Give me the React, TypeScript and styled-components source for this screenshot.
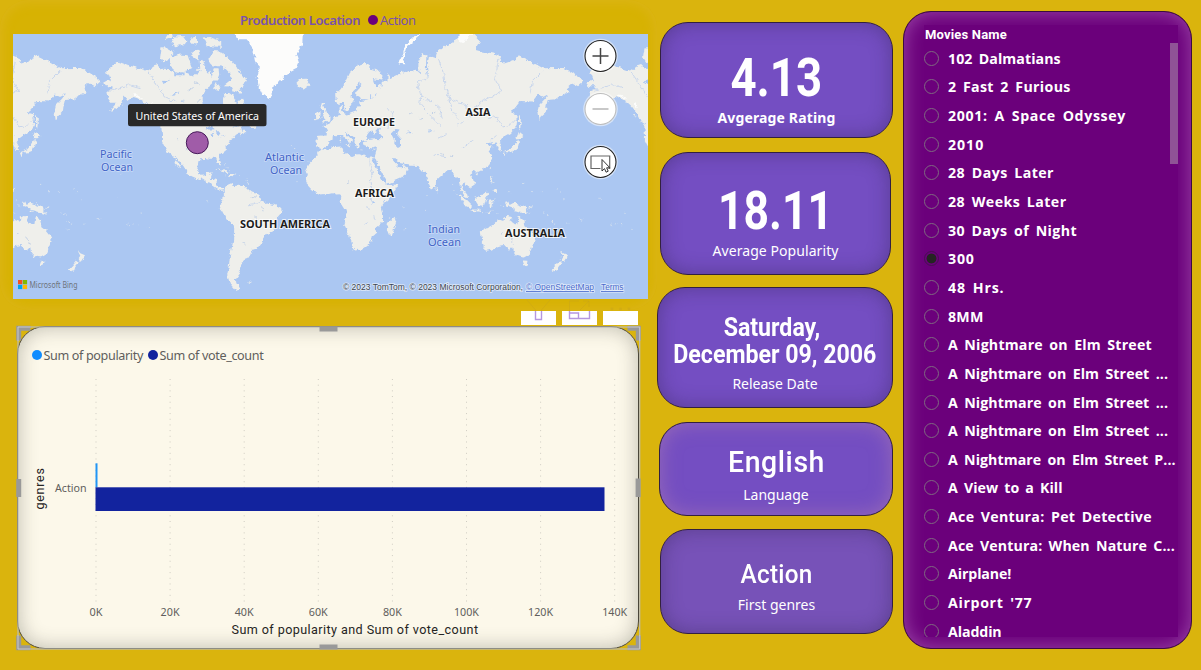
import React from "react";
import styled, { createGlobalStyle } from "styled-components";

const ui = `"Noto Sans", "Open Sans", sans-serif`;
const din = `Roboto, "Liberation Sans", sans-serif`;

const GlobalStyle = createGlobalStyle`
  * { box-sizing: border-box; }
  html, body { margin: 0; padding: 0; overflow: hidden; }
  body { background: #dab40d; font-family: ${ui}; }
`;

const Page = styled.div`
  display: flex;
  width: 1201px;
  height: 670px;
  background: #dab40d;
`;

const LeftColumn = styled.div`
  display: flex;
  flex-direction: column;
  width: 657px;
`;

/* ---------- map ---------- */

const MapPanel = styled.section`
  display: flex;
  flex-direction: column;
  height: 310px;
  padding: 6px 9px 11px 13px;
  border-radius: 28px;
  background: #d7b203;
  box-shadow: inset 0 0 12px 2px #dcb519;
`;

const MapHeader = styled.div`
  display: flex;
  align-items: center;
  height: 28px;
  padding-left: 227px;
  color: #7a52ad;
  font-size: 13px;
`;

const MapTitle = styled.span<{ $w: number }>`
  width: ${(p) => p.$w}px;
  font-weight: 600;
  letter-spacing: -0.39px;
  white-space: nowrap;
`;

const Dot = styled.i<{ $c: string }>`
  flex: none;
  width: 10px;
  height: 10px;
  border-radius: 50%;
  background: ${(p) => p.$c};
`;

const MapLegend = styled.span`
  display: flex;
  align-items: center;
  gap: 2px;
  letter-spacing: -0.5px;
`;

const MapSvg = styled.svg`
  display: block;
  width: 635px;
  height: 265px;
`;

type Pt = [number, number];

const parse = (s: string): Pt[] =>
  s.trim().split(/\s+/).map((p) => p.split(",").map(Number) as Pt);

// Web Mercator: 483px for 360 degrees, Greenwich at 328.5, equator at 200.5
const project = ([lon, lat]: Pt) => {
  const x = 328.5 + lon * 1.3417;
  const y = 200.5 - 76.87 * Math.log(Math.tan(Math.PI / 4 + (lat * Math.PI) / 360));
  return `${x.toFixed(1)} ${y.toFixed(1)}`;
};
const shape = (s: string) => "M" + parse(s).map(project).join("L") + "Z";
const line = (s: string) => "M" + parse(s).map(project).join("L");

const land = [
  // North and Central America
  "-168,65.6 -164,66.5 -162,66 -164,68 -166,68.4 -163,69.5 -160,70.5 -156.5,71.3 -150,70.5 -141,69.7 -135,69 -130,70.2 -127,70.5 -124,69.6 -120,69.5 -115,68.9 -115,67.8 -108,67.8 -108,68.7 -102,67.8 -98,67.8 -97,68.5 -95.5,69 -96,71.5 -94.5,72 -92,70.5 -92,69.5 -90,68.6 -88,68.8 -87,67.3 -85.5,69.7 -82,69.7 -81.5,68 -83,66.3 -86.5,66.3 -87,65 -90,64 -92,63 -94.5,61 -94.5,59 -92.5,57 -88,56.5 -82.3,55.1 -82,53 -80,51.3 -79,51.5 -79,54 -79.7,54.8 -77,55.8 -76.5,57.2 -78.5,59 -77.5,60.5 -78,62.3 -74,62.3 -71,61.2 -69.5,60 -70,58.8 -68,58.2 -65.5,59.5 -64.5,60.3 -62,57.5 -61,56 -57.5,54.5 -56,52.5 -58.5,51.3 -60,50.2 -66,50.2 -68.5,49 -71,47 -67,49.2 -64.5,49 -65,47.5 -64.5,46.2 -61,45.8 -60,46 -64,44.5 -66,43.5 -65.5,45 -67,45 -70,43.8 -70.8,42.5 -70,41.7 -74,40.7 -74.2,39.5 -75.5,38.5 -76,37 -75.7,35.5 -77.5,34.3 -79.5,33 -81.3,31.5 -81.3,29.8 -80.1,27 -80.4,25.2 -81.8,26 -82.8,28 -83.8,29.9 -86,30.3 -89.5,30.3 -89.3,29.1 -91.5,29.5 -94.5,29.5 -97,28 -97.5,25.5 -97.8,22.5 -96.3,19.3 -94.5,18.2 -91.5,18.5 -90.5,20.5 -87,21.5 -87.5,19.5 -88.2,17.5 -88.8,15.9 -86,15.9 -83.2,15 -83.6,12 -83.5,10.8 -82,9 -79.8,9.5 -77.4,8.5 -78,7.5 -80,7.3 -82.9,8.1 -85.5,10 -87.5,12.9 -91.5,14 -94.5,16.2 -97,15.8 -101.5,17.5 -105.3,19.8 -105.4,21.5 -108.5,25 -112.5,29.5 -114.7,31.6 -113.5,29 -111.3,26 -109.6,23 -112,24.7 -114.8,27.5 -114.3,28.8 -117.1,32.5 -120.6,34.5 -122.5,37.7 -124.2,40.3 -124.1,43.5 -124.6,48.3 -123,49 -127.5,51 -130,54.5 -133.5,57 -136.5,58.5 -141,60 -146,60.8 -150,59.5 -152,61 -153.5,59.3 -158,56.5 -163.5,54.8 -158.5,57.8 -157.3,58.7 -162,58.7 -164.5,60.5 -165.5,62.5 -161,63.8 -161,64.5 -166,64.5",
  // South America
  "-77.4,8.5 -75.5,10.7 -72,12.2 -71.5,10.8 -68,11 -62,10.7 -60,8.5 -57,6 -51.5,4.3 -50,0 -44,-2.7 -39,-3.5 -35.2,-5.5 -35,-9 -38.5,-13 -39.5,-18.5 -41.5,-22.5 -46,-24 -48.6,-27 -50,-30 -53.5,-34 -58,-34.5 -57,-36.5 -58,-38.3 -62,-39 -62.5,-41 -65,-41.2 -64,-42.8 -67.3,-46 -65.8,-48 -69,-51 -68.5,-53 -65.3,-54.8 -69.5,-55.3 -73.5,-52.5 -75.5,-48.5 -74,-43 -73.5,-38 -71.5,-31 -70.3,-22 -70.5,-18.3 -76,-14 -79.5,-7.5 -81.2,-5.5 -80,-3 -80.5,-0.5 -78.8,1.5 -77.2,4 -77.4,7",
  // Europe and Asia
  "-9,37 -9.5,38.8 -8.8,41 -9.2,43.2 -4,43.5 -1.5,43.4 -1.2,45.8 -2.5,47.3 -4.7,48.3 -1.5,48.7 -1.8,49.7 0.2,49.6 1.6,50.8 4,51.7 5,53.2 8.5,53.7 8.2,56.8 10.6,57.7 10,55 12,54.2 14.2,53.8 18.5,54.7 21,55.2 21.2,57.2 24.3,57.3 23.5,59.2 30,59.9 24,60.1 21.4,60.8 21.5,63 25.3,65 22.3,65.8 20.5,63.8 17.5,62.5 17.2,60.7 18.8,59.8 16.5,57.5 14.3,55.5 12.8,55.6 11.2,59 8.2,58.1 5.5,59 5,61.8 9,63.5 13,66 16,68.5 21,70 25.7,71 31,70.3 30,69.6 36,69.2 41,67.5 40,66.3 33,66.7 35,64.3 38,64 37,65 40.5,64.7 40.2,66 44,66.3 44,68.5 46,67 54,68.4 60,69 65,69.3 68.5,68.3 67,70 67,71.5 70,73.3 73,72.7 72.5,69 74,67 73.5,70 75,72.7 80,72.2 81,73.6 87,74.8 98,76.2 104.3,77.7 113,75.8 109,74 114,73.6 123,73.2 128,72.5 131,70.9 139,71.8 141,72.8 150,71.5 160,69.7 170,69.8 176,69.8 180,68.9 188,67 190,66 186,64.5 181.5,65.5 178,64.3 179,62.5 172,60.8 170,60 163.5,59.7 162.5,57.5 162,55 158,52.8 156.7,51.2 155.7,55 157,57.8 161.5,60.3 163.7,61.8 160,60.8 156,61.7 152,59.2 143,59.3 138,56 135.3,54.7 139.5,54 141,52.5 140.2,48.5 136,44.8 132,43.2 130,42.2 127.5,39.8 129.4,37 129,35.2 126.4,34.5 126.8,37 125,38 125,39.6 121.3,39 122,40.5 118,39 119,37.5 122.5,37.2 119.3,35 121.8,32 122,30 120,26.5 117,23.6 113.5,22.2 110,20.5 108,21.6 105.8,19 108.7,15.3 109.2,12 106.8,10.4 104.8,8.7 105,10.2 102.5,12 100.8,13.5 99.3,10.5 100.3,8 103.4,4.5 104.2,1.3 101.3,2.8 100.3,6 98.3,8 98.6,12 97.5,16.5 94.5,16 94,19 91.8,22.5 88,21.7 86.5,20 82.3,16.7 80.2,14.5 79.9,10.5 77.6,8.1 76,10.5 73,17 72.7,21 70.5,20.8 69,22.3 67,24.8 61.5,25.1 57.3,25.8 56,27.1 52,27.7 50,30 48,30 48.3,28.5 50.2,26.5 51.5,25.5 51.5,24.2 54.5,24.1 56.3,26 56.7,24.3 59.8,22.5 57.8,19 55,17 52,15.6 45,12.8 43.3,12.8 42.7,16.3 39.2,21 37,25 34.9,29.4 34.3,31.3 36,35.8 36,36.8 32,36.1 30.5,36.7 27.5,36.8 26.3,39.5 29,41 31.5,41.2 36,41.6 41.5,41.5 39,44 37,45 38.5,47 35,46.3 36,45.3 33.6,44.5 33,46 30.5,46.2 28.5,44 28,42 29,41 26,40.7 23.5,40.5 23.5,38.2 22.8,36.5 21.3,37.5 19.4,41 19,42.2 15,44.5 13.7,45.5 12.3,45.2 13.5,43.5 16,41.9 18.4,40 16.8,40.4 16,38 15.7,40 12.3,41.8 10.3,43.5 8.8,44.4 6,43.1 3.2,43.2 3,41.8 0,40 -0.3,38.5 -2,36.8 -5.4,36.1",
  // Africa
  "-6,35.8 -2,35.2 3,36.9 10,37.3 11,35 10.3,34 15,32.3 19,30.3 20,32.5 23,32.6 29,30.9 32.5,31.2 34.2,31.3 32.6,29.8 34,26.5 35.5,24 37.2,21 37.5,18.7 39.7,15 43,12.5 43.5,11.5 51.2,11.9 50.5,9 47.5,4 42,-1 39,-5 40.5,-10.5 40.7,-15 35,-20 35.5,-24 32.8,-26 32.5,-28.5 29,-32 25.7,-34 20,-34.8 18.3,-34 17.5,-30.5 14.5,-23 11.8,-17.5 13.7,-11 12.2,-6 9,-1 9.7,3.5 8.5,4.7 5.5,4.4 4,6.4 -2,4.8 -7.5,4.4 -13,8.5 -16.8,12.5 -17.4,14.7 -16.2,19 -17,21.5 -14.5,26 -11,29 -9.8,31.5",
  // Australia and Tasmania
  "113.5,-22.5 114,-26 115.7,-32 115,-34.3 118,-35 123.5,-34 126,-32.3 131,-31.5 135,-34.8 137.8,-32.8 138,-35.5 140,-37.8 143.5,-38.8 146.3,-39 150,-37.4 151.3,-33.5 153.5,-28.5 152.8,-25.3 149,-21 146,-18.8 145.3,-15 143.5,-14 142.5,-10.8 141.5,-13 140.8,-17.4 139,-17.4 135.7,-15 136.8,-12.2 132.6,-11.5 130.3,-13 129.5,-15 126.5,-14 123.8,-16.5 122.2,-18",
  "144.7,-40.8 148.3,-40.9 147.8,-43 146,-43.6",
  // New Zealand
  "172.8,-34.5 175,-36.5 178.5,-37.7 177,-39.5 175.2,-41.6 173.8,-39.3 175,-38",
  "172.7,-40.6 174.2,-41.8 171.3,-44.3 170.5,-46 168.5,-46.6 166.5,-45.8 170,-43",
  // New Guinea
  "131,-0.8 134,-0.8 135,-3.3 138,-1.7 144.5,-4 147.5,-6 147.5,-8.3 150.5,-10.6 147,-9.5 143,-9 140,-8 138,-8.3 138,-6 133,-4 133,-2.5",
  // Borneo, Sumatra, Java, Sulawesi
  "109.2,1.8 113,3.2 117,7 119,5 117.5,1 116,-4 111.5,-3.3 110,-1",
  "95.4,5.6 98,4.2 103,0 106,-3 105.8,-5.8 102.3,-4 98.7,1.7",
  "105.3,-6.6 108.5,-6.7 112.7,-6.9 114.4,-8.5 108,-7.7",
  "119.5,0.5 125,1.5 120.5,-0.5 123.2,-1 121.5,-2.5 122.5,-5 121,-3 120.3,-5.5 119.4,-4",
  "117,-8.3 122.8,-8.3 119.5,-9.2",
  // Philippines, Taiwan, Hainan
  "120.5,18.5 122.2,18.3 121.5,15 124,13 120.7,13.8",
  "122,7 124,8.5 126,9.5 126.2,6.5 124,6.3",
  "121.5,25.2 120.1,23 120.9,22",
  "108.8,19.3 111,20 110,18.3",
  // Japan and Sakhalin
  "130.8,34 135.5,35.6 137,37 140,39.8 141.5,41.4 142,39.5 140.8,35.8 137,34.6 135.5,33.6",
  "130,33.5 132,33.5 131,31.2",
  "140,42 141.8,45.4 145.3,43.3 143,42",
  "142,54 143.3,52 143.2,49 142.8,46.3 142,47",
  // Sri Lanka, Madagascar
  "80,9.7 81.8,7.5 80.5,6 79.8,8",
  "49.3,-12 50.5,-15.8 47.2,-24.8 45,-25.4 43.5,-22 44.3,-16.5",
  // British Isles and Iceland
  "-5.5,50.1 1.3,51.2 1.6,52.8 -0.3,53.5 -2,56 -2,57.6 -4,57.7 -3.2,58.6 -5,58.6 -6,56.5 -3.2,54.8 -4.5,52.5 -3,51.4",
  "-10,51.7 -6.3,52.3 -5.7,54.6 -8,55.2 -10,54",
  "-24,65.5 -22,66.4 -16,66.5 -13.7,65 -18.5,63.4 -22.5,63.9 -22,64.8",
  // Mediterranean islands
  "12.5,38 15.5,38.2 15.1,36.7", "8.3,41 9.6,41 9.5,39.2 8.5,39", "8.7,42.5 9.5,43 9.3,41.5", "32.5,35 34.4,35.6 33.5,34.6", "23.7,35.5 26.2,35.2 24,35",
  // Canadian Arctic
  "-61.5,66.5 -64,64 -66,63 -65.5,62 -71,62.8 -73,64.4 -78,64.5 -73.5,66 -73,68.2 -78,70 -88,70.5 -89.5,72 -86,73.7 -81,73.6 -77,72.8 -71.5,71.3 -67.5,69.5",
  "-117,69.9 -113,68.5 -106,68.8 -101.5,69.5 -105,72.8 -110,73 -114,72.6 -118.5,72.5 -117.8,71",
  "-123,71.2 -120,71.6 -115.5,73.3 -118,74.2 -124.5,74.3 -125.5,72.3",
  "-96,73 -97,71.6 -102.5,72.8 -100.5,73.8 -97,74", "-90,74.7 -80,74.6 -80,75.7 -89,76.4 -93,76.3", "-108,75 -114,74.7 -117,75.3 -115,76.5 -109,76.6 -106,75.8", "-103,75.2 -98,75 -98,76.4 -103,76.3",
  "-80.5,63.8 -84,65.8 -86,64 -83,63", "-95,69.5 -99,69.2 -97,70", "-116,76.5 -122,76 -118,77.5",
  // Newfoundland, Vancouver Island, Haida Gwaii, Kodiak
  "-59,47.7 -55.8,51.4 -53,47.5 -55.5,47", "-128.3,50.7 -125,50 -123.4,48.4", "-133,54 -131.7,54 -131.3,52.3", "-154.5,57.5 -152.3,58.3 -152.7,57.2",
  // Caribbean
  "-84.8,22 -82,23.1 -77,21.5 -74.3,20.2 -77.5,19.9 -79,21.5 -82,22.6", "-74.3,18.4 -73,19.9 -68.5,18.7 -71,17.8", "-78,18.5 -76.3,18 -77.5,17.8", "-67,18.4 -65.7,18.3 -66,17.9",
  // Falklands
  "-61,-51.7 -58,-51.5 -59,-52.2",
  "148.5,-5.7 152,-4.3 151,-6", "164.2,-20.3 166.8,-22.3 166,-22", "165,-15 167,-15.5 167.3,-16.5",
];

const snow = [
  "-75,79 -68,76 -61,76 -57,74.5 -54.5,71 -51,69.8 -53.5,67.5 -52,64.5 -49,61.5 -44,59.9 -42.5,61.5 -40.5,64.8 -36.5,66 -32,68 -24,69.5 -22,71 -24,73 -19.5,75 -19,78 -18,80 -75,80",
  "52,71 55.5,73 57,75 62,76.2 68.5,77 66,76 59,74.7 56,72 57.3,70.7 54,70.8",
  "96,76 98,76.8 104,77.9 108,77 100,75.5",
  "-141,60.5 -146,61.3 -143,61.8 -137,60", "-133,58 -130,56.5 -131,58.5",
];

const water = [
  // Caspian, Aral, Great Lakes, Baikal, Victoria, northern lakes
  "47,45 50,47 53,46.7 51,44.5 54,42 54,37 51,36.8 49,39 49.5,41.5",
  "58.5,44 60.5,46.5 61,45",
  "-92,46.8 -88,48.7 -84.7,46.8 -88,46.7", "-87.5,42 -87.8,44.5 -85.3,45.8 -86.3,42.5", "-84,45.9 -80.5,45.5 -81.7,43.2 -83.3,44", "-83.3,41.8 -79,42.9 -81,42.5", "-79.5,43.5 -76.3,44 -77,43.3",
  "-99,50.5 -96.5,50.5 -98.5,53.8", "-117,61 -110,62.8 -115,62.2", "-124.5,66 -118,66.8 -122,65.2", "-111,59 -107,59.4 -110,59.5",
  "104,51.6 108,53.2 109.8,55.6 107,53", "32,-0.3 34,-0.3 33.5,-2.5 32,-2.3", "31,60 33,60.8 31,61.6", "35,61 36,62.5 34.8,62.2", "74,46 78.5,46.5 75,45.2",
];

const rivers = [
  "73,67 66,66 69,61 76,59.5 83,56 85,52", "69,61 68,58.5 73,55.5 77,52.5 84,48", "82,72 86,68 87,64 90,61 92,56 96,52",
  "127,72 124,67 129,63 120,60.5 113,59 107,54.5", "90,60.5 97,58.5 103,58 104,53", "141,52.5 136,49 130,48 125,53 119,52", "160,69 152,66 150,62",
  "31,30 31,25 33,20 31,14 32,5 32,0", "29.3,-3.5 30.5,-8.5", "34.3,-10 35,-14", "27,-17.5 30,-16",
  "45,47 46,52 49,55 43,56", "-50,0 -56,-2.5 -60,-3.2", "-135,69 -128,65 -122,61 -114,59", "-164,63 -156,64 -148,65 -140,64",
  "126,44 121,41", "82,42 88,44", "100,37 108,41", "79,32 88,31", "96,49 101,51",
];

const texture = [
  "-49,-5 -48,-8", "-58,3 -54,2.5", "-55,-12 -54,-14", "-64,-30 -62,-31", "134,-26 137,-29", "136,-30 138,-31", "128,-24 130,-23", "13,13 15,14", "-106,35 -104,38", "-112,41 -113,42", "-112,50 -108,52", "-103,54 -101,57", "-98,58 -96,60", "-105,63 -101,64", "-100,66 -96,65", "-73,54 -71,55", "-75,57 -73,58", "60,54 62,55", "68,52 71,51", "77,54 79,55", "84,33 86,32", "90,31 93,32",
];

const reefs = "170,9 172,7 175,1 160,-9 163,-10 168,-17 178,-17 -171,-14 -172,-13 -150,-17 -149,-18 -140,-9 -157,21 -155,19.5 -158,2 -146,-16 -142,-18 -135,-20 -16,28 -14,28 -25,37 -28,38 -24,15 145,13 134,7 151,7 158,7 57,-20 55,-21 73,4 72,-7 55,-5 45,-12 -61,15 -61,13 -62,17 -78,26 -76,24 -74,22 -91,-0.5 92,12 93,8 127,0 128,-3 130,-4 125,-9 115,-8.6";

const Land = () => (
  <g>
    <path d={land.map(shape).join("")} fill="#efefeb" />
    <path d={snow.map(shape).join("")} fill="#fcfcfb" />
    <path d={water.map(shape).join("")} fill="#abc7f2" />
    <path d={rivers.map(line).join("")} fill="none" stroke="#c0d1ec" strokeWidth="0.8" />
    <path d={texture.map(line).join("")} fill="none" stroke="#c3d1e6" strokeWidth="1" />
    {parse(reefs).map((p, i) => {
      const [x, y] = project(p).split(" ");
      return <rect key={i} x={x} y={y} width="1.2" height="1" fill="#d3dfef" />;
    })}
  </g>
);

type LabelProps = { x: number; y: number; w: number; children: string };
const Continent = ({ x, y, w, children }: LabelProps) => (
  <text x={x} y={y} textLength={w} lengthAdjust="spacingAndGlyphs" fontSize="11.4" fontWeight="700" fill="#1c1c1c" stroke="#fff" strokeOpacity=".75" strokeWidth="2" paintOrder="stroke">
    {children}
  </text>
);
const Sea = ({ x, y, w, children }: LabelProps) => (
  <text x={x} y={y} textLength={w} lengthAdjust="spacingAndGlyphs" fontSize="10.8" fill="#3f63c6" stroke="#dbe6fa" strokeOpacity=".6" strokeWidth="1.6" paintOrder="stroke">
    {children}
  </text>
);
const Credit = ({ x, y, w, link, children }: LabelProps & { link?: boolean }) => (
  <text x={x} y={y} textLength={w} lengthAdjust="spacingAndGlyphs" fontFamily="Liberation Sans, sans-serif" fontSize="8.4" fill={link ? "#4a6ccc" : "#3d4650"} textDecoration={link ? "underline" : undefined} stroke="#fff" strokeOpacity=".6" strokeWidth="1.6" paintOrder="stroke">
    {children}
  </text>
);

const WorldMap = () => (
  <MapSvg viewBox="13 34 635 265" fontFamily="Noto Sans, Open Sans, sans-serif">
    <defs>
      <filter id="coast" x="-500" y="0" width="1700" height="320" filterUnits="userSpaceOnUse" colorInterpolationFilters="sRGB">
        <feTurbulence type="fractalNoise" baseFrequency="0.22" numOctaves="3" seed="4" />
        <feDisplacementMap in="SourceGraphic" scale="5" xChannelSelector="R" yChannelSelector="G" />
      </filter>
    </defs>
    <rect x="13" y="34" width="636" height="265" fill="#abc7f2" />
    <g filter="url(#coast)">
      <g transform="translate(-483 0)"><Land /></g>
      <Land />
      <g transform="translate(483 0)"><Land /></g>
    </g>

    <Sea x={100} y={157.5} w={32}>Pacific</Sea>
    <Sea x={101} y={170.5} w={32}>Ocean</Sea>
    <Sea x={265} y={160.5} w={39}>Atlantic</Sea>
    <Sea x={270} y={173.5} w={32}>Ocean</Sea>
    <Sea x={428} y={233} w={32}>Indian</Sea>
    <Sea x={428} y={246} w={33}>Ocean</Sea>
    <Continent x={353} y={125.5} w={42}>EUROPE</Continent>
    <Continent x={465.5} y={116} w={25}>ASIA</Continent>
    <Continent x={355} y={197} w={39}>AFRICA</Continent>
    <Continent x={240} y={227.5} w={90}>SOUTH AMERICA</Continent>
    <Continent x={505} y={236.5} w={60}>AUSTRALIA</Continent>

    <rect x="18" y="280" width="4.3" height="4.3" fill="#f25022" />
    <rect x="22.8" y="280" width="4.3" height="4.3" fill="#7fba00" />
    <rect x="18" y="284.8" width="4.3" height="4.3" fill="#00a4ef" />
    <rect x="22.8" y="284.8" width="4.3" height="4.3" fill="#ffb900" />
    <text x="29.5" y="288" textLength="48" lengthAdjust="spacingAndGlyphs" fontSize="8" fill="#6d737c">Microsoft Bing</text>
    <Credit x={343} y={290} w={180}>© 2023 TomTom, © 2023 Microsoft Corporation,</Credit>
    <Credit x={526} y={290} w={68} link>© OpenStreetMap</Credit>
    <Credit x={601} y={290} w={22.5} link>Terms</Credit>

    <circle cx="197.3" cy="142.7" r="11" fill="#a05ca8" stroke="#471a5a" strokeWidth="1" />
    <rect x="128" y="104" width="138.5" height="22.3" rx="2.5" fill="#292929" />
    <text x="135.5" y="120" textLength="123.5" lengthAdjust="spacingAndGlyphs" fontSize="11.6" fill="#fff">United States of America</text>

    {[56, 109, 162].map((cy) => (
      <g key={cy} transform={`translate(600.5 ${cy})`} fill="none">
        <circle r="17.3" fill="#fff" fillOpacity=".5" />
        <circle r="15.5" fill="#fff" stroke={cy === 109 ? "#bdbdbd" : "#222"} strokeWidth="1.1" />
        {cy === 56 && <path d="M-8 0H8M0 -8V8" stroke="#444" strokeWidth="1.5" />}
        {cy === 109 && <path d="M-8 0H8" stroke="#ababab" strokeWidth="1.3" />}
        {cy === 162 && (
          <>
            <path d="M0 6.5H-9.5V-6H9.2V6.5H8" stroke="#666" strokeWidth="1.2" />
            <path d="M1.5 -1.5V10L4 7.6L5.6 11.2L7.7 10.2L6.1 6.8H9.4Z" transform="translate(0 -1)" fill="#fff" stroke="#333" strokeWidth="1" />
          </>
        )}
      </g>
    ))}
  </MapSvg>
);

/* ---------- header buttons over the bar chart ---------- */

const VisualActions = styled.div`
  display: flex;
  justify-content: flex-end;
  gap: 6px;
  height: 16px;
  padding: 1px 19px 1px 0;
`;

const ActionTab = styled.div`
  width: 35px;
  height: 14px;
  background: #fff;
  svg { display: block; overflow: visible; }
`;

/* ---------- bar chart ---------- */

const ChartPanel = styled.section`
  position: relative;
  display: flex;
  flex-direction: column;
  width: 622px;
  height: 323px;
  margin-left: 17px;
  padding: 19px 0 0 13.5px;
  border: 1px solid #4a463a;
  border-radius: 28px;
  background: #fcf8ea;
  box-shadow: inset 0 0 20px rgba(60, 60, 50, 0.33);
`;

const ChartLegend = styled.div`
  display: flex;
  align-items: center;
  gap: 5px;
  height: 18px;
`;

const LegendItem = styled.span<{ $w: number }>`
  display: flex;
  align-items: center;
  gap: 2px;
  width: ${(p) => p.$w}px;
  color: #605e5c;
  font-size: 12.6px;
  letter-spacing: -0.36px;
  white-space: nowrap;
`;

const Plot = styled.svg`
  display: block;
  width: 600px;
  height: 275px;
`;

const Selection = styled.svg`
  position: absolute;
  left: -2.5px;
  top: -2px;
  width: 627px;
  height: 327px;
  pointer-events: none;
`;

const ticks = ["0K", "20K", "40K", "60K", "80K", "100K", "120K", "140K"];
const tickWidth = [13, 19, 19, 19, 19, 25, 25, 25];

const BarChart = () => (
  <Plot viewBox="31.5 364 600 275" fontFamily="Noto Sans, Open Sans, sans-serif">
    {ticks.map((t, i) => {
      const x = 95.5 + i * 74.1;
      return (
        <g key={t}>
          <path d={`M${x} 379V602`} stroke="#cfccc2" strokeWidth="1" strokeDasharray="1 4.68" />
          <text x={x} y="615.5" textAnchor="middle" textLength={tickWidth[i]} lengthAdjust="spacingAndGlyphs" fontSize="10.8" fill="#605e5c">{t}</text>
        </g>
      );
    })}
    <rect x="95" y="463.3" width="2" height="24" fill="#2195f5" />
    <rect x="95" y="487.3" width="509" height="23.7" fill="#12239e" />
    <text x="54.5" y="492" textLength="31.5" lengthAdjust="spacingAndGlyphs" fontSize="11" fill="#605e5c">Action</text>
    <g fontFamily="Roboto, sans-serif" fontSize="12.6" fill="#252423">
      <text x="231" y="634" textLength="246.5" lengthAdjust="spacing">Sum of popularity and Sum of vote_count</text>
      <text transform="translate(43.5 509.5) rotate(-90)" textLength="41.5" lengthAdjust="spacing">genres</text>
    </g>
  </Plot>
);

const SelectionFrame = () => (
  <Selection viewBox="15.5 325 627 327" fill="none">
    <rect x="17.5" y="327" width="621.7" height="322" stroke="#bdbcb4" strokeWidth="1.2" />
    <g stroke="#999" strokeWidth="5">
      <path d="M18.2 340.5V328.2H30M627 328.2H637.8V340.5M18.2 635.5V647.8H30M627 647.8H637.8V635.5" />
      <path d="M319 329H337M319 647H337M18.2 479V497M637.6 478.5V497" />
    </g>
    <path d="M17.5 341V327H30M627 327H639.2V341M17.5 635V649H30M627 649H639.2V635" stroke="#c9c9c9" strokeWidth="1" />
  </Selection>
);

/* ---------- cards ---------- */

const Cards = styled.div`
  display: flex;
  flex-direction: column;
  width: 236px;
  padding-top: 22px;
`;

const Card = styled.section<{ $l: number; $w: number; $h: number; $gap: number; $glow?: boolean; $bg?: string; $pt: number }>`
  flex: none;
  display: flex;
  flex-direction: column;
  align-items: center;
  width: ${(p) => p.$w}px;
  height: ${(p) => p.$h}px;
  margin: 0 0 ${(p) => p.$gap}px ${(p) => p.$l}px;
  padding-top: ${(p) => p.$pt}px;
  border: 1px solid #33203f;
  border-radius: 28px;
  background: ${(p) => p.$bg ?? "#744ec2"};
  box-shadow: inset 0 0 20px ${(p) => (p.$glow ? "rgba(180,130,175,0.55)" : "rgba(50,35,80,0.42)")};
  color: #fff;
`;

const Value = styled.div<{ $size: number; $lh: number; $weight: number; $sx?: number; $ls?: number }>`
  font-family: ${din};
  font-size: ${(p) => p.$size}px;
  line-height: ${(p) => p.$lh}px;
  font-weight: ${(p) => p.$weight};
  letter-spacing: ${(p) => p.$ls ?? 0}px;
  text-align: center;
  white-space: pre;
  transform: scaleX(${(p) => p.$sx ?? 1});
`;

const Caption = styled.div<{ $bold?: boolean; $ls?: number; $mt?: number }>`
  margin-top: ${(p) => p.$mt ?? 0}px;
  font-size: 14px;
  line-height: 20px;
  font-weight: ${(p) => (p.$bold ? 700 : 400)};
  letter-spacing: ${(p) => p.$ls ?? 0}px;
  white-space: nowrap;
`;

/* ---------- slicer ---------- */

const Slicer = styled.section`
  width: 289px;
  height: 638px;
  margin: 11px 0 0 10px;
  padding: 13px 13px 0 20px;
  border: 1px solid #3b0d3f;
  border-radius: 28px;
  background: #6b007b;
  box-shadow: inset 0 0 20px rgba(190, 120, 200, 0.6);
`;

const SlicerBody = styled.div`
  display: grid;
  grid-template-columns: 246px 8px;
  grid-template-rows: 18px 594px;
  background: #6b007b;
`;

const SlicerTitle = styled.h2`
  grid-column: 1 / 3;
  margin: 0;
  padding-left: 1px;
  color: #fff;
  font-family: ${din};
  font-size: 13px;
  line-height: 20px;
  font-weight: 700;
  letter-spacing: 0.18px;
`;

const List = styled.ul`
  width: 254px;
  margin: 0;
  padding: 1px 0 0;
  list-style: none;
  height: 594px;
  overflow: hidden;
`;

const Item = styled.li<{ $ls: number }>`
  display: flex;
  align-items: center;
  gap: 9px;
  height: 28.65px;
  color: #fff;
  font-family: "Open Sans", "Noto Sans", sans-serif;
  font-size: 14.2px;
  font-weight: 700;
  letter-spacing: ${(p) => p.$ls}px;
  word-spacing: 2.5px;
  white-space: nowrap;
`;

const Radio = styled.i<{ $on: boolean }>`
  flex: none;
  width: 15px;
  height: 15px;
  border: 1px solid ${(p) => (p.$on ? "#461050" : "#7f6a80")};
  border-radius: 50%;
  background: ${(p) => (p.$on ? "radial-gradient(circle, #252423 4.6px, transparent 5.3px)" : "none")};
`;

const ScrollThumb = styled.div`
  width: 8px;
  height: 121px;
  background: #8f5396;
`;

const movies: [string, number][] = [
  ["102 Dalmatians", 0.06],
  ["2 Fast 2 Furious", 0.33],
  ["2001: A Space Odyssey", 0.63],
  ["2010", 0.95],
  ["28 Days Later", 0.43],
  ["28 Weeks Later", 0.43],
  ["30 Days of Night", 0.4],
  ["300", 0.8],
  ["48 Hrs.", 0.8],
  ["8MM", 0.2],
  ["A Nightmare on Elm Street", 0.2],
  ["A Nightmare on Elm Street ...", 0.1],
  ["A Nightmare on Elm Street ...", 0.1],
  ["A Nightmare on Elm Street ...", 0.1],
  ["A Nightmare on Elm Street P...", 0.05],
  ["A View to a Kill", 0],
  ["Ace Ventura: Pet Detective", 0.28],
  ["Ace Ventura: When Nature C...", 0.1],
  ["Airplane!", -0.1],
  ["Airport '77", 0.65],
  ["Aladdin", -0.1],
];

export default function App() {
  return (
    <>
      <GlobalStyle />
      <Page>
        <LeftColumn>
          <MapPanel>
            <MapHeader>
              <MapTitle $w={128}>Production Location</MapTitle>
              <MapLegend><Dot $c="#6b007b" />Action</MapLegend>
            </MapHeader>
            <WorldMap />
          </MapPanel>
          <VisualActions>
            <ActionTab>
              <svg width="35" height="14" fill="none">
                <path d="M6 -11L14.5 -1V0M29 -11L20.5 -1V0" stroke="#c9a51a" strokeOpacity=".5" />
                <path d="M14.5 0V8.5H20.5V0" stroke="#b596e0" strokeWidth="1.4" />
              </svg>
            </ActionTab>
            <ActionTab>
              <svg width="35" height="14" fill="none">
                <path d="M7.5 0V-10H17M18 -1L27 -10M21 -10H27V-4" stroke="#c9a51a" strokeOpacity=".5" />
                <path d="M7.5 0V7.5H27.5V0M7.5 2H16.5V7.5" stroke="#b596e0" strokeWidth="1.4" />
              </svg>
            </ActionTab>
            <ActionTab>
              <svg width="35" height="14" fill="#c9a51a" fillOpacity=".5">
                <circle cx="9" cy="-2" r="1.4" /><circle cx="17.5" cy="-2" r="1.4" /><circle cx="26" cy="-2" r="1.4" />
              </svg>
            </ActionTab>
          </VisualActions>
          <ChartPanel>
            <ChartLegend>
              <LegendItem $w={111}><Dot $c="#118dff" />Sum of popularity</LegendItem>
              <LegendItem $w={130}><Dot $c="#12239e" />Sum of vote_count</LegendItem>
            </ChartLegend>
            <BarChart />
            <SelectionFrame />
          </ChartPanel>
        </LeftColumn>

        <Cards>
          <Card $l={3} $w={233} $h={116} $gap={14} $pt={26}>
            <Value $size={53} $lh={58} $weight={700} $sx={0.86}>4.13</Value>
            <Caption $bold $ls={0.15} $mt={1}>Avgerage Rating</Caption>
          </Card>
          <Card $l={3} $w={231} $h={123} $gap={12} $pt={29}>
            <Value $size={53} $lh={58} $weight={700} $sx={0.84}>18.11</Value>
            <Caption $ls={0.07} $mt={1}>Average Popularity</Caption>
          </Card>
          <Card $l={0} $w={236} $h={121} $gap={14} $pt={26}>
            <Value $size={25.5} $lh={27} $weight={700} $sx={0.908}>{"Saturday, \nDecember 09, 2006"}</Value>
            <Caption $mt={5.5}>Release Date</Caption>
          </Card>
          <Card $l={2} $w={234} $h={94} $gap={13} $glow $pt={21}>
            <Value $size={29} $lh={36} $weight={500} $sx={0.98} $ls={0.6}>English</Value>
            <Caption $mt={5}>Language</Caption>
          </Card>
          <Card $l={3} $w={233} $h={105} $gap={0} $bg="#7752b8" $pt={26}>
            <Value $size={26} $lh={36} $weight={500} $sx={0.935} $ls={0.3}>Action</Value>
            <Caption $mt={3}>First genres</Caption>
          </Card>
        </Cards>

        <Slicer>
          <SlicerBody>
            <SlicerTitle>Movies Name</SlicerTitle>
            <List>
              {movies.map(([title, spacing], i) => (
                <Item key={i} $ls={spacing}><Radio $on={title === "300"} />{title}</Item>
              ))}
            </List>
            <ScrollThumb />
          </SlicerBody>
        </Slicer>
      </Page>
    </>
  );
}
